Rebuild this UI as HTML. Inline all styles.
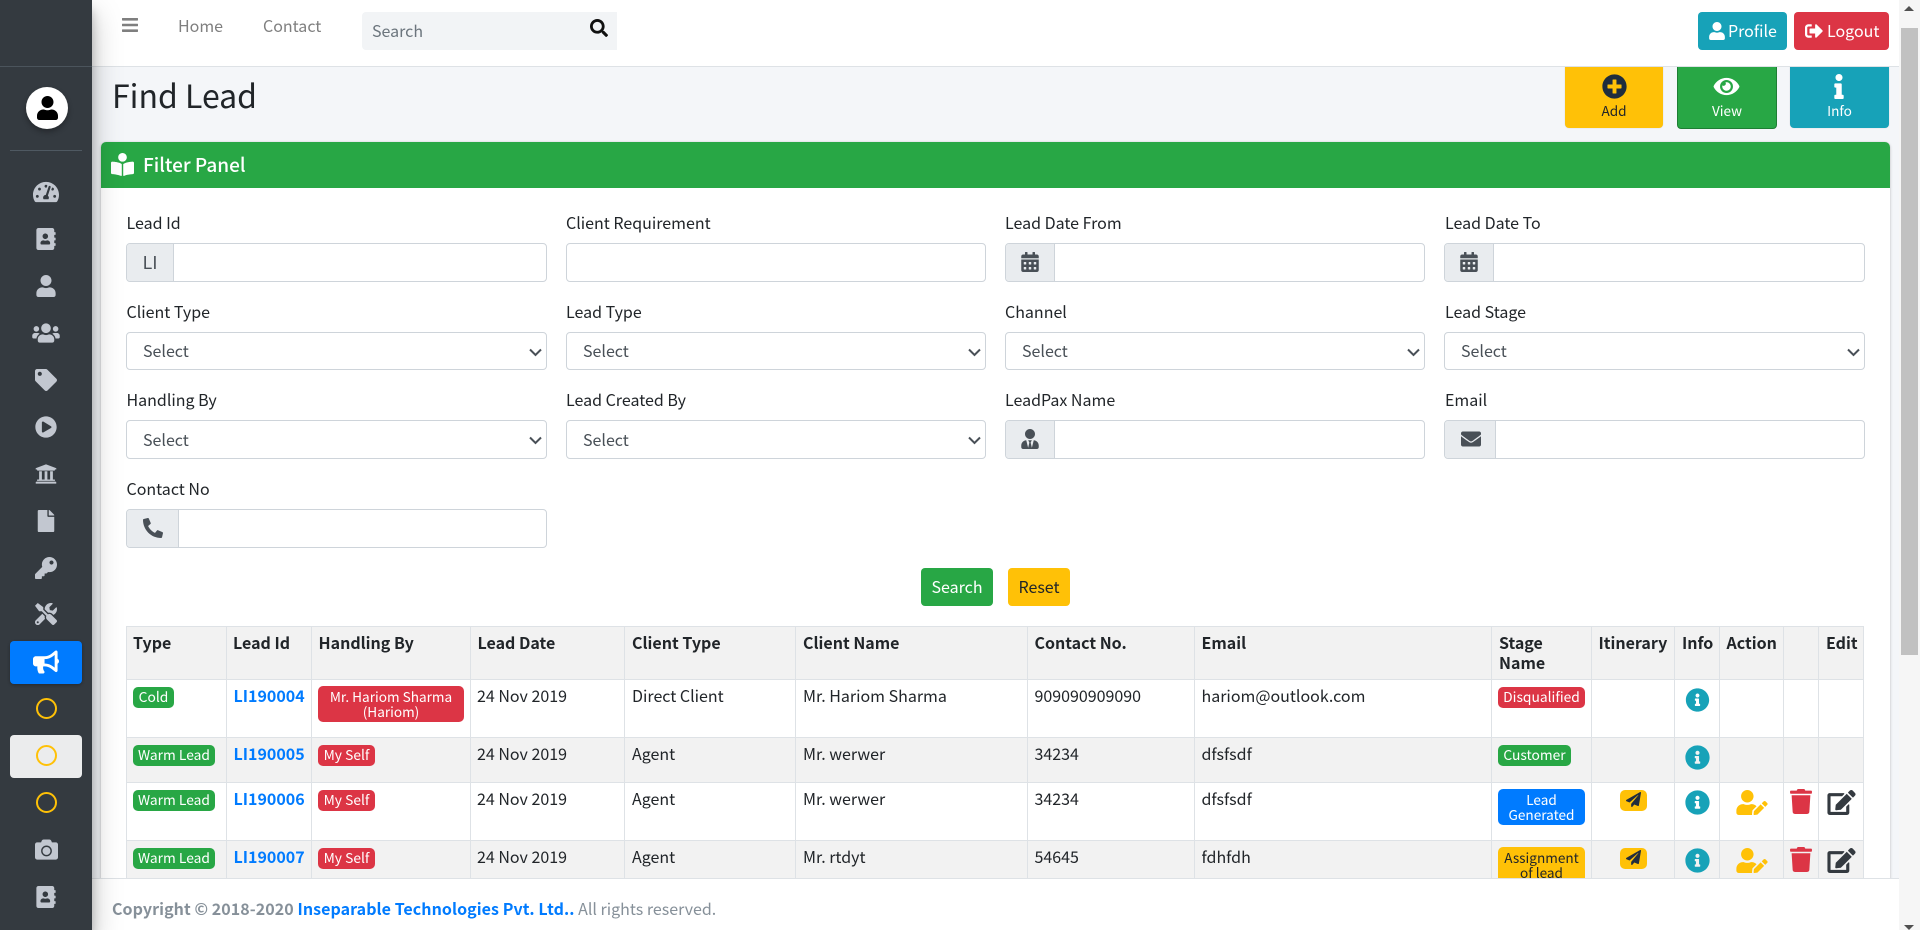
<!DOCTYPE html>
<html lang="en">
<head>
<meta charset="utf-8">
<title>Find Lead</title>
<style>
html,body{margin:0;padding:0;width:1920px;height:930px;overflow:hidden;background:#f4f6f9}
body{font-family:"Noto Sans CJK JP","Liberation Sans",sans-serif;font-size:16px;color:#212529;position:relative}
div,span,svg,a{position:absolute;box-sizing:border-box}
.t{white-space:nowrap;line-height:20px;height:20px}
.c{text-align:center}
b{font-weight:700}
svg{fill:currentColor;display:block}
#side{left:0;top:0;width:92px;height:930px;background:#343a40;box-shadow:0 14px 28px rgba(0,0,0,.25),0 10px 10px rgba(0,0,0,.22);z-index:5;color:#c2c7d0}
#main{left:0;top:0;width:1899px;height:878px;overflow:hidden}
#head{left:92px;top:0;width:1807px;height:67px;background:#fff;border-bottom:1px solid #dee2e6;z-index:3}
.box{background:#fff;border:1px solid #ced4da;border-radius:4px;height:39px}
.ad{left:0;top:0;bottom:0;background:#e9ecef;border-right:1px solid #ced4da;border-radius:3px 0 0 3px;color:#495057}
.sel{color:#495057;font-size:16px}
.hl{left:126px;width:1738px;height:1px;background:#dee2e6}
.vl{top:626px;width:1px;height:252px;background:#dee2e6}
.bd{border-radius:5px;color:#fff;font-size:13.8px;line-height:14px;text-align:center;height:21px;padding-top:2px;white-space:nowrap}
.two{font-size:13.6px;line-height:14.5px;padding-top:3px}
.gr{background:#28a745}.rd{background:#dc3545}.bl{background:#007bff}.ye{background:#ffc107;color:#212529}
.lk{color:#007bff;font-weight:700}
.th{font-weight:700}
.ch{fill:none;stroke:#495057;stroke-width:2;width:13px;height:9px}
.ring{width:21px;height:21px;border:2.5px solid #ffc107;border-radius:50%}
</style>
</head>
<body>
<svg width="0" height="0" style="left:0;top:0">
<defs>
<symbol id="user" viewBox="0 0 448 512"><path d="M224 256c70.7 0 128-57.3 128-128S294.7 0 224 0 96 57.3 96 128s57.3 128 128 128zm89.6 32h-16.7c-22.2 10.2-46.9 16-72.9 16s-50.6-5.8-72.9-16h-16.7C60.2 288 0 348.2 0 422.4V464c0 26.5 21.5 48 48 48h352c26.5 0 48-21.5 48-48v-41.6c0-74.2-60.2-134.4-134.4-134.4z"/></symbol>
<symbol id="abook" viewBox="0 0 448 512"><path d="M436 160c6.6 0 12-5.4 12-12v-40c0-6.6-5.4-12-12-12h-20V48c0-26.5-21.5-48-48-48H48C21.5 0 0 21.5 0 48v416c0 26.5 21.5 48 48 48h320c26.5 0 48-21.5 48-48v-48h20c6.6 0 12-5.4 12-12v-40c0-6.6-5.4-12-12-12h-20v-64h20c6.6 0 12-5.4 12-12v-40c0-6.6-5.4-12-12-12h-20v-64h20zm-228-32c35.3 0 64 28.7 64 64s-28.7 64-64 64-64-28.7-64-64 28.7-64 64-64zm112 236.8c0 10.6-10 19.2-22.4 19.2H118.4C106 384 96 375.4 96 364.8v-19.2c0-31.8 30.1-57.6 67.2-57.6h5c12.3 5.1 25.7 8 39.8 8s27.6-2.9 39.8-8h5c37.1 0 67.2 25.8 67.2 57.6v19.2z"/></symbol>
<symbol id="cal" viewBox="0 0 448 512"><path d="M0 464c0 26.5 21.5 48 48 48h352c26.5 0 48-21.5 48-48V192H0v272zm320-196c0-6.6 5.4-12 12-12h40c6.6 0 12 5.4 12 12v40c0 6.6-5.4 12-12 12h-40c-6.6 0-12-5.4-12-12v-40zm0 128c0-6.6 5.4-12 12-12h40c6.6 0 12 5.4 12 12v40c0 6.6-5.4 12-12 12h-40c-6.6 0-12-5.4-12-12v-40zM192 268c0-6.6 5.4-12 12-12h40c6.6 0 12 5.4 12 12v40c0 6.6-5.4 12-12 12h-40c-6.6 0-12-5.4-12-12v-40zm0 128c0-6.6 5.4-12 12-12h40c6.6 0 12 5.4 12 12v40c0 6.6-5.4 12-12 12h-40c-6.6 0-12-5.4-12-12v-40zM64 268c0-6.6 5.4-12 12-12h40c6.6 0 12 5.4 12 12v40c0 6.6-5.4 12-12 12H76c-6.6 0-12-5.4-12-12v-40zm0 128c0-6.6 5.4-12 12-12h40c6.6 0 12 5.4 12 12v40c0 6.6-5.4 12-12 12H76c-6.6 0-12-5.4-12-12v-40zM400 64h-48V16c0-8.8-7.2-16-16-16h-32c-8.8 0-16 7.2-16 16v48H160V16c0-8.8-7.2-16-16-16h-32c-8.8 0-16 7.2-16 16v48H48C21.5 64 0 85.5 0 112v48h448v-48c0-26.5-21.5-48-48-48z"/></symbol>
<symbol id="infoc" viewBox="0 0 512 512"><path d="M256 8C119.043 8 8 119.083 8 256c0 136.997 111.043 248 248 248s248-111.003 248-248C504 119.083 392.957 8 256 8zm0 110c23.196 0 42 18.804 42 42s-18.804 42-42 42-42-18.804-42-42 18.804-42 42-42zm56 254c0 6.627-5.373 12-12 12h-88c-6.627 0-12-5.373-12-12v-24c0-6.627 5.373-12 12-12h12v-64h-12c-6.627 0-12-5.373-12-12v-24c0-6.627 5.373-12 12-12h64c6.627 0 12 5.373 12 12v100h12c6.627 0 12 5.373 12 12v24z"/></symbol>
<symbol id="plane" viewBox="0 0 512 512"><path d="M476 3.2L12.5 270.6c-18.1 10.4-15.8 35.6 2.2 43.2L121 358.4l287.3-253.2c5.5-4.9 13.3 2.6 8.6 8.3L176 407v80.5c0 23.6 28.5 32.9 42.5 15.8L282 426l124.6 52.2c14.2 6 30.4-2.9 33-18.2l72-432C515 7.8 493.3-6.8 476 3.2z"/></symbol>
<symbol id="uedit" viewBox="0 0 640 512"><path d="M224 256c70.7 0 128-57.3 128-128S294.7 0 224 0 96 57.3 96 128s57.3 128 128 128zm89.6 32h-16.7c-22.2 10.2-46.9 16-72.9 16s-50.6-5.8-72.9-16h-16.7C60.2 288 0 348.2 0 422.4V464c0 26.5 21.5 48 48 48h274.9c-2.4-6.8-3.4-14-2.6-21.3l6.8-60.9 1.2-11.1 7.9-7.9 77.3-77.3c-24.5-27.7-60-45.5-99.9-45.5zm45.3 145.3l-6.8 61c-1.1 10.2 7.5 18.8 17.6 17.6l60.9-6.8 137.9-137.9-71.7-71.7-137.9 137.8zM633 268.9L595.1 231c-9.3-9.3-24.5-9.3-33.8 0l-37.8 37.8-4.1 4.1 71.8 71.7 41.8-41.8c9.3-9.4 9.3-24.5 0-33.9z"/></symbol>
<symbol id="trash" viewBox="0 0 448 512"><path d="M432 32H312l-9.4-18.7A24 24 0 0 0 281.1 0H166.8a23.72 23.72 0 0 0-21.4 13.3L136 32H16A16 16 0 0 0 0 48v32a16 16 0 0 0 16 16h416a16 16 0 0 0 16-16V48a16 16 0 0 0-16-16zM53.2 467a48 48 0 0 0 47.9 45h245.8a48 48 0 0 0 47.9-45L416 128H32z"/></symbol>
<symbol id="edit" viewBox="0 0 576 512"><path d="M402.6 83.2l90.2 90.2c3.8 3.8 3.8 10 0 13.8L274.4 405.6l-92.8 10.3c-12.4 1.4-22.9-9.1-21.5-21.5l10.3-92.8L388.8 83.2c3.8-3.8 10-3.8 13.8 0zm162-22.9l-48.8-48.8c-15.2-15.2-39.9-15.2-55.2 0l-35.4 35.4c-3.8 3.8-3.8 10 0 13.8l90.2 90.2c3.8 3.8 10 3.8 13.8 0l35.4-35.4c15.2-15.3 15.2-40 0-55.2zM384 346.2V448H64V128h229.8c3.2 0 6.2-1.3 8.5-3.5l40-40c7.6-7.6 2.2-20.5-8.5-20.5H48C21.5 64 0 85.5 0 112v352c0 26.5 21.5 48 48 48h352c26.5 0 48-21.5 48-48V306.2c0-10.7-12.9-16-20.5-8.5l-40 40c-2.2 2.3-3.5 5.3-3.5 8.5z"/></symbol>
</defs>
</svg>

<div id="main">
  <div class="t" style="left:112px;top:73px;font-size:32px;line-height:44px;height:44px">Find Lead</div>

  <div style="left:1565px;top:60px;width:98px;height:68px;background:#ffc107;border-radius:0 0 4px 4px;box-shadow:0 0 1px rgba(0,0,0,.2)"></div>
  <svg style="left:1602px;top:74px;width:25px;height:25px;color:#1f2d3d" viewBox="0 0 512 512"><path d="M256 8C119 8 8 119 8 256s111 248 248 248 248-111 248-248S393 8 256 8zm144 276c0 6.6-5.4 12-12 12h-92v92c0 6.6-5.4 12-12 12h-56c-6.6 0-12-5.4-12-12v-92h-92c-6.6 0-12-5.4-12-12v-56c0-6.6 5.4-12 12-12h92v-92c0-6.6 5.4-12 12-12h56c6.6 0 12 5.4 12 12v92h92c6.6 0 12 5.4 12 12v56z"/></svg>
  <div class="t c" style="left:1565px;width:98px;top:100px;font-size:13.6px;color:#212529">Add</div>

  <div style="left:1677px;top:60px;width:100px;height:69px;background:#28a745;border:1px solid #1e7e34;border-radius:0 0 4px 4px"></div>
  <svg style="left:1712px;top:75px;width:29px;height:23px;color:#fff" viewBox="0 0 576 512"><path d="M572.52 241.4C518.29 135.59 410.93 64 288 64S57.68 135.64 3.48 241.41a32.35 32.35 0 0 0 0 29.19C57.71 376.41 165.07 448 288 448s230.32-71.64 284.52-177.41a32.35 32.35 0 0 0 0-29.19zM288 400a144 144 0 1 1 144-144 143.93 143.93 0 0 1-144 144zm0-240a95.31 95.31 0 0 0-25.31 3.79 47.85 47.85 0 0 1-66.9 66.9A95.78 95.78 0 1 0 288 160z"/></svg>
  <div class="t c" style="left:1677px;width:100px;top:100px;font-size:13.6px;color:#fff">View</div>

  <div style="left:1790px;top:60px;width:99px;height:68px;background:#17a2b8;border-radius:0 0 4px 4px;box-shadow:0 0 1px rgba(0,0,0,.2)"></div>
  <svg style="left:1834px;top:74px;width:10px;height:25px;color:#fff" viewBox="0 0 192 512"><path d="M20 424.229h20V279.771H20c-11.046 0-20-8.954-20-20V212c0-11.046 8.954-20 20-20h112c11.046 0 20 8.954 20 20v212.229h20c11.046 0 20 8.954 20 20V492c0 11.046-8.954 20-20 20H20c-11.046 0-20-8.954-20-20v-47.771c0-11.046 8.954-20 20-20zM96 0C56.235 0 24 32.235 24 72s32.235 72 72 72 72-32.235 72-72S135.764 0 96 0z"/></svg>
  <div class="t c" style="left:1790px;width:99px;top:100px;font-size:13.6px;color:#fff">Info</div>

  <div style="left:101px;top:142px;width:1789px;height:800px;background:#fff;border-radius:5px 5px 0 0;box-shadow:0 0 1px rgba(0,0,0,.125),0 1px 3px rgba(0,0,0,.2)"></div>
  <div style="left:101px;top:142px;width:1789px;height:46px;background:#28a745;border-radius:5px 5px 0 0"></div>
  <svg style="left:111px;top:153px;width:23px;height:23px;color:#fff" viewBox="0 0 512 512"><path d="M352 96c0-53.02-42.98-96-96-96s-96 42.98-96 96 42.98 96 96 96 96-42.98 96-96zM233.59 241.1c-59.33-36.32-155.43-46.3-203.79-49.05C13.55 191.13 0 203.51 0 219.14v222.8c0 14.33 11.59 26.28 26.49 27.05 43.66 2.29 131.99 10.68 193.04 41.43 9.37 4.72 20.48-1.71 20.48-11.87V252.56c-.01-4.67-2.32-8.95-6.42-11.46zm248.61-49.05c-48.35 2.74-144.46 12.73-203.78 49.05-4.1 2.51-6.41 6.96-6.41 11.63v245.79c0 10.19 11.14 16.63 20.54 11.9 61.04-30.72 149.32-39.11 192.97-41.4 14.9-.78 26.49-12.73 26.49-27.06V219.14c-.01-15.63-13.56-28.01-29.81-27.09z"/></svg>
  <div class="t" style="left:143px;top:153px;font-size:19px;line-height:24px;height:24px;color:#fff;font-weight:500">Filter Panel</div>

  <!-- Row 1 -->
  <div class="t" style="left:126.5px;top:212px">Lead Id</div>
  <div class="t" style="left:566px;top:212px">Client Requirement</div>
  <div class="t" style="left:1005px;top:212px">Lead Date From</div>
  <div class="t" style="left:1445px;top:212px">Lead Date To</div>

  <div class="box" style="left:126px;top:243px;width:421px"><div class="ad" style="width:47px"><div class="t c" style="left:0;width:46px;top:8px;font-size:18px">LI</div></div></div>
  <div class="box" style="left:566px;top:243px;width:420px"></div>
  <div class="box" style="left:1005px;top:243px;width:420px"><div class="ad" style="width:49px"><svg style="left:15px;top:8px;width:18px;height:20px"><use href="#cal"/></svg></div></div>
  <div class="box" style="left:1444px;top:243px;width:421px"><div class="ad" style="width:49px"><svg style="left:15px;top:8px;width:18px;height:20px"><use href="#cal"/></svg></div></div>

  <!-- Row 2 -->
  <div class="t" style="left:126.5px;top:301px">Client Type</div>
  <div class="t" style="left:566px;top:301px">Lead Type</div>
  <div class="t" style="left:1005px;top:301px">Channel</div>
  <div class="t" style="left:1445px;top:301px">Lead Stage</div>

  <div class="box" style="left:126px;top:332px;width:421px;height:38px"><div class="t sel" style="left:16px;top:7px">Select</div><svg class="ch" style="left:402px;top:15px" viewBox="0 0 13 9"><path d="M1 1.5l5.5 5.5 5.5-5.5"/></svg></div>
  <div class="box" style="left:566px;top:332px;width:420px;height:38px"><div class="t sel" style="left:16px;top:7px">Select</div><svg class="ch" style="left:401px;top:15px" viewBox="0 0 13 9"><path d="M1 1.5l5.5 5.5 5.5-5.5"/></svg></div>
  <div class="box" style="left:1005px;top:332px;width:420px;height:38px"><div class="t sel" style="left:16px;top:7px">Select</div><svg class="ch" style="left:401px;top:15px" viewBox="0 0 13 9"><path d="M1 1.5l5.5 5.5 5.5-5.5"/></svg></div>
  <div class="box" style="left:1444px;top:332px;width:421px;height:38px"><div class="t sel" style="left:16px;top:7px">Select</div><svg class="ch" style="left:402px;top:15px" viewBox="0 0 13 9"><path d="M1 1.5l5.5 5.5 5.5-5.5"/></svg></div>

  <!-- Row 3 -->
  <div class="t" style="left:126.5px;top:389px">Handling By</div>
  <div class="t" style="left:566px;top:389px">Lead Created By</div>
  <div class="t" style="left:1005px;top:389px">LeadPax Name</div>
  <div class="t" style="left:1445px;top:389px">Email</div>

  <div class="box" style="left:126px;top:420px;width:421px"><div class="t sel" style="left:16px;top:8px">Select</div><svg class="ch" style="left:402px;top:15px" viewBox="0 0 13 9"><path d="M1 1.5l5.5 5.5 5.5-5.5"/></svg></div>
  <div class="box" style="left:566px;top:420px;width:420px"><div class="t sel" style="left:16px;top:8px">Select</div><svg class="ch" style="left:401px;top:15px" viewBox="0 0 13 9"><path d="M1 1.5l5.5 5.5 5.5-5.5"/></svg></div>
  <div class="box" style="left:1005px;top:420px;width:420px"><div class="ad" style="width:49px"><svg style="left:15px;top:8px;width:18px;height:20px" viewBox="0 0 448 512"><path d="M224 256c70.7 0 128-57.3 128-128S294.7 0 224 0 96 57.3 96 128s57.3 128 128 128zm95.8 32.6L272 480l-32-136 32-56h-96l32 56-32 136-47.8-191.4C56.9 292 0 350.3 0 422.4V464c0 26.5 21.5 48 48 48h352c26.5 0 48-21.5 48-48v-41.6c0-72.1-56.9-130.4-128.2-133.8z"/></svg></div></div>
  <div class="box" style="left:1444px;top:420px;width:421px"><div class="ad" style="width:51px"><svg style="left:16px;top:8px;width:20px;height:20px" viewBox="0 0 512 512"><path d="M502.3 190.8c3.9-3.1 9.7-.2 9.7 4.7V400c0 26.5-21.5 48-48 48H48c-26.5 0-48-21.5-48-48V195.6c0-5 5.7-7.8 9.7-4.7 22.4 17.4 52.1 39.5 154.1 113.6 21.1 15.4 56.7 47.8 92.2 47.6 35.7.3 72-32.8 92.3-47.6 102-74.1 131.6-96.3 154-113.7zM256 320c23.2.4 56.6-29.2 73.4-41.4 132.7-96.3 142.8-104.7 173.4-128.7 5.8-4.5 9.2-11.5 9.2-18.9v-19c0-26.5-21.5-48-48-48H48C21.5 64 0 85.5 0 112v19c0 7.4 3.4 14.3 9.2 18.9 30.6 23.9 40.7 32.4 173.4 128.7 16.8 12.2 50.2 41.8 73.4 41.4z"/></svg></div></div>

  <!-- Row 4 -->
  <div class="t" style="left:126.5px;top:478px">Contact No</div>
  <div class="box" style="left:126px;top:509px;width:421px"><div class="ad" style="width:52px"><svg style="left:16px;top:8px;width:20px;height:20px;transform:scaleX(-1)" viewBox="0 0 512 512"><path d="M493.4 24.6l-104-24c-11.3-2.6-22.9 3.3-27.5 13.9l-48 112c-4.2 9.8-1.4 21.3 6.9 28l60.6 49.6c-36 76.7-98.9 140.5-177.2 177.2l-49.6-60.6c-6.8-8.3-18.2-11.1-28-6.9l-112 48C3.9 366.5-2 378.1.6 389.4l24 104C27.1 504.2 36.7 512 48 512c256.1 0 464-207.5 464-464 0-11.2-7.7-20.9-18.6-23.4z"/></svg></div></div>

  <div style="left:921px;top:568px;width:72px;height:38px;background:#28a745;border-radius:4px"><div class="t c" style="left:0;width:72px;top:8px;color:#fff">Search</div></div>
  <div style="left:1008px;top:568px;width:62px;height:38px;background:#ffc107;border-radius:4px"><div class="t c" style="left:0;width:62px;top:8px">Reset</div></div>

  <!-- Table backgrounds -->
  <div style="left:126px;top:626px;width:1738px;height:54px;background:#f2f2f2"></div>
  <div style="left:126px;top:737px;width:1738px;height:46px;background:#f2f2f2"></div>
  <div style="left:126px;top:840px;width:1738px;height:40px;background:#f2f2f2"></div>
  <div class="hl" style="top:626px"></div><div class="hl" style="top:679px"></div><div class="hl" style="top:737px"></div><div class="hl" style="top:782px"></div><div class="hl" style="top:840px"></div>
  <div class="vl" style="left:126px"></div><div class="vl" style="left:226px"></div><div class="vl" style="left:311px"></div><div class="vl" style="left:470px"></div><div class="vl" style="left:624px"></div><div class="vl" style="left:795px"></div><div class="vl" style="left:1027px"></div><div class="vl" style="left:1194px"></div><div class="vl" style="left:1491px"></div><div class="vl" style="left:1591px"></div><div class="vl" style="left:1674px"></div><div class="vl" style="left:1719px"></div><div class="vl" style="left:1783px"></div><div class="vl" style="left:1818px"></div><div class="vl" style="left:1863px"></div>

  <!-- Table head -->
  <div class="t th" style="left:133px;top:632px">Type</div>
  <div class="t th" style="left:233px;top:632px">Lead Id</div>
  <div class="t th" style="left:318.5px;top:632px">Handling By</div>
  <div class="t th" style="left:477.5px;top:632px">Lead Date</div>
  <div class="t th" style="left:632px;top:632px">Client Type</div>
  <div class="t th" style="left:803px;top:632px">Client Name</div>
  <div class="t th" style="left:1034.5px;top:632px">Contact No.</div>
  <div class="t th" style="left:1201.5px;top:632px">Email</div>
  <div class="t th" style="left:1499px;top:632px">Stage</div>
  <div class="t th" style="left:1499px;top:652px">Name</div>
  <div class="t th" style="left:1598.5px;top:632px">Itinerary</div>
  <div class="t th" style="left:1682px;top:632px">Info</div>
  <div class="t th" style="left:1726.5px;top:632px">Action</div>
  <div class="t th" style="left:1826px;top:632px">Edit</div>

  <!-- Row 1 -->
  <div class="bd gr" style="left:133px;top:687px;width:41px">Cold</div>
  <div class="t lk" style="left:233.5px;top:685px">LI190004</div>
  <div class="bd rd two" style="left:318px;top:686px;width:146px;height:36px">Mr. Hariom Sharma<br>(Hariom)</div>
  <div class="t" style="left:477px;top:685px">24 Nov 2019</div>
  <div class="t" style="left:632px;top:685px">Direct Client</div>
  <div class="t" style="left:803px;top:685px">Mr. Hariom Sharma</div>
  <div class="t" style="left:1034.5px;top:685px">909090909090</div>
  <div class="t" style="left:1201.5px;top:685px">hariom@outlook.com</div>
  <div class="bd rd" style="left:1498px;top:687px;width:87px">Disqualified</div>
  <svg style="left:1685px;top:688px;width:25px;height:24px;color:#17a2b8"><use href="#infoc"/></svg>

  <!-- Row 2 -->
  <div class="bd gr" style="left:133px;top:745px;width:82px">Warm Lead</div>
  <div class="t lk" style="left:233.5px;top:743px">LI190005</div>
  <div class="bd rd" style="left:318px;top:745px;width:57px">My Self</div>
  <div class="t" style="left:477px;top:743px">24 Nov 2019</div>
  <div class="t" style="left:632px;top:743px">Agent</div>
  <div class="t" style="left:803px;top:743px">Mr. werwer</div>
  <div class="t" style="left:1034.5px;top:743px">34234</div>
  <div class="t" style="left:1201.5px;top:743px">dfsfsdf</div>
  <div class="bd gr" style="left:1498px;top:745px;width:73px">Customer</div>
  <svg style="left:1685px;top:745px;width:25px;height:25px;color:#17a2b8"><use href="#infoc"/></svg>

  <!-- Row 3 -->
  <div class="bd gr" style="left:133px;top:790px;width:82px">Warm Lead</div>
  <div class="t lk" style="left:233.5px;top:788px">LI190006</div>
  <div class="bd rd" style="left:318px;top:790px;width:57px">My Self</div>
  <div class="t" style="left:477px;top:788px">24 Nov 2019</div>
  <div class="t" style="left:632px;top:788px">Agent</div>
  <div class="t" style="left:803px;top:788px">Mr. werwer</div>
  <div class="t" style="left:1034.5px;top:788px">34234</div>
  <div class="t" style="left:1201.5px;top:788px">dfsfsdf</div>
  <div class="bd bl two" style="left:1498px;top:789px;width:87px;height:36px">Lead<br>Generated</div>
  <div class="bd ye" style="left:1620px;top:790px;width:27px"></div>
  <svg style="left:1626px;top:792px;width:15px;height:15px;color:#212d3d"><use href="#plane"/></svg>
  <svg style="left:1685px;top:790px;width:25px;height:25px;color:#17a2b8"><use href="#infoc"/></svg>
  <svg style="left:1736px;top:790px;width:32px;height:25px;color:#ffc107"><use href="#uedit"/></svg>
  <svg style="left:1790px;top:789px;width:22px;height:25px;color:#dc3545"><use href="#trash"/></svg>
  <svg style="left:1827px;top:790px;width:29px;height:25px;color:#343a40"><use href="#edit"/></svg>

  <!-- Row 4 -->
  <div class="bd gr" style="left:133px;top:848px;width:82px">Warm Lead</div>
  <div class="t lk" style="left:233.5px;top:846px">LI190007</div>
  <div class="bd rd" style="left:318px;top:848px;width:57px">My Self</div>
  <div class="t" style="left:477px;top:846px">24 Nov 2019</div>
  <div class="t" style="left:632px;top:846px">Agent</div>
  <div class="t" style="left:803px;top:846px">Mr. rtdyt</div>
  <div class="t" style="left:1034.5px;top:846px">54645</div>
  <div class="t" style="left:1201.5px;top:846px">fdhfdh</div>
  <div class="bd ye two" style="left:1498px;top:847px;width:87px;height:36px">Assignment<br>of lead</div>
  <div class="bd ye" style="left:1620px;top:848px;width:27px"></div>
  <svg style="left:1626px;top:850px;width:15px;height:15px;color:#212d3d"><use href="#plane"/></svg>
  <svg style="left:1685px;top:848px;width:25px;height:25px;color:#17a2b8"><use href="#infoc"/></svg>
  <svg style="left:1736px;top:848px;width:32px;height:25px;color:#ffc107"><use href="#uedit"/></svg>
  <svg style="left:1790px;top:847px;width:22px;height:25px;color:#dc3545"><use href="#trash"/></svg>
  <svg style="left:1827px;top:848px;width:29px;height:25px;color:#343a40"><use href="#edit"/></svg>
</div>

<!-- Header -->
<div id="head">
  <svg style="left:30px;top:18px;width:16px;height:14px;color:#7f7f7f" viewBox="0 60 448 392" preserveAspectRatio="none"><path d="M16 132h416c8.837 0 16-7.163 16-16V76c0-8.837-7.163-16-16-16H16C7.163 60 0 67.163 0 76v40c0 8.837 7.163 16 16 16zm0 160h416c8.837 0 16-7.163 16-16v-40c0-8.837-7.163-16-16-16H16c-8.837 0-16 7.163-16 16v40c0 8.837 7.163 16 16 16zm0 160h416c8.837 0 16-7.163 16-16v-40c0-8.837-7.163-16-16-16H16c-8.837 0-16 7.163-16 16v40c0 8.837 7.163 16 16 16z"/></svg>
  <div class="t" style="left:86px;top:15px;color:#7f7f7f">Home</div>
  <div class="t" style="left:171px;top:15px;color:#7f7f7f">Contact</div>
  <div style="left:270px;top:12px;width:255px;height:38px;background:#f2f4f6;border-radius:4px 0 0 4px"><div class="t" style="left:10px;top:8px;color:#6c757d">Search</div>
    <svg style="left:228px;top:7px;width:18px;height:18px;color:#111" viewBox="0 0 512 512"><path d="M505 442.7L405.3 343c-4.5-4.5-10.6-7-17-7H372c27.6-35.3 44-79.7 44-128C416 93.1 322.9 0 208 0S0 93.1 0 208s93.1 208 208 208c48.3 0 92.7-16.4 128-44v16.3c0 6.4 2.5 12.5 7 17l99.7 99.7c9.4 9.4 24.6 9.4 33.9 0l28.3-28.3c9.4-9.4 9.4-24.6.1-34zM208 336c-70.7 0-128-57.2-128-128 0-70.7 57.2-128 128-128 70.7 0 128 57.2 128 128 0 70.7-57.2 128-128 128z"/></svg></div>
  <div style="left:1606px;top:12px;width:89px;height:38px;background:#17a2b8;border-radius:4px"><svg style="left:11px;top:10px;width:16px;height:18px;color:#fff"><use href="#user"/></svg><div class="t" style="left:30px;top:8px;color:#fff">Profile</div></div>
  <div style="left:1702px;top:12px;width:95px;height:38px;background:#dc3545;border-radius:4px"><svg style="left:11px;top:10px;width:18px;height:18px;color:#fff" viewBox="0 0 512 512"><path d="M497 273L329 441c-15 15-41 4.5-41-17v-96H152c-13.3 0-24-10.7-24-24v-96c0-13.3 10.7-24 24-24h136V88c0-21.4 25.9-32 41-17l168 168c9.3 9.4 9.3 24.6 0 34zM192 436v-40c0-6.6-5.4-12-12-12H96c-17.7 0-32-14.3-32-32V160c0-17.7 14.3-32 32-32h84c6.6 0 12-5.4 12-12V76c0-6.6-5.4-12-12-12H96c-53 0-96 43-96 96v192c0 53 43 96 96 96h84c6.6 0 12-5.4 12-12z"/></svg><div class="t" style="left:33px;top:8px;color:#fff">Logout</div></div>
</div>

<!-- Footer -->
<div style="left:92px;top:878px;width:1807px;height:52px;background:#fff;border-top:1px solid #dee2e6;z-index:3">
  <div class="t" style="left:20px;top:19px;color:#869099"><b style="letter-spacing:.06px">Copyright © 2018-2020 <span style="position:static;color:#007bff">Inseparable Technologies Pvt. Ltd..</span></b> All rights reserved.</div>
</div>

<!-- Sidebar -->
<div id="side">
  <div style="left:0;top:66px;width:92px;height:1px;background:#4b545c"></div>
  <div style="left:26px;top:87px;width:42px;height:42px;border-radius:50%;background:#fff;box-shadow:0 3px 6px rgba(0,0,0,.3)"></div>
  <svg style="left:37px;top:96px;width:21px;height:24px;color:#000"><use href="#user"/></svg>
  <div style="left:10px;top:150px;width:72px;height:1px;background:#4f5962"></div>
  <svg style="left:33px;top:180px;width:26px;height:24px" viewBox="0 0 576 512"><path d="M288 32C128.94 32 0 160.94 0 320c0 52.8 14.25 102.26 39.06 144.8 5.61 9.62 16.3 15.2 27.44 15.2h443c11.14 0 21.83-5.58 27.44-15.2C561.75 422.26 576 372.8 576 320c0-159.06-128.94-288-288-288zm0 64c14.71 0 26.58 10.13 30.32 23.65-1.11 2.26-2.64 4.23-3.45 6.67l-9.22 27.67c-5.13 3.49-10.97 6.01-17.64 6.01-17.67 0-32-14.33-32-32S270.33 96 288 96zM96 384c-17.67 0-32-14.33-32-32s14.33-32 32-32 32 14.33 32 32-14.33 32-32 32zm48-160c-17.67 0-32-14.33-32-32s14.33-32 32-32 32 14.33 32 32-14.33 32-32 32zm246.77-72.41l-61.33 184C343.13 347.33 352 364.54 352 384c0 11.72-3.38 22.55-8.88 32H232.88c-5.5-9.45-8.88-20.28-8.88-32 0-33.94 26.5-61.43 59.9-63.59l61.34-184.01c4.17-12.56 17.73-19.45 30.36-15.17 12.57 4.19 19.35 17.79 15.17 30.36zm14.66 57.2l15.52-46.55c3.47-1.29 7.13-2.23 11.05-2.23 17.67 0 32 14.33 32 32s-14.33 32-32 32c-11.38-.01-20.89-6.27-26.57-15.22zM480 384c-17.67 0-32-14.33-32-32s14.33-32 32-32 32 14.33 32 32-14.33 32-32 32z"/></svg>
  <svg style="left:36px;top:228px;width:20px;height:22px"><use href="#abook"/></svg>
  <svg style="left:36px;top:275px;width:20px;height:22px"><use href="#user"/></svg>
  <svg style="left:32px;top:322px;width:28px;height:22px" viewBox="0 0 640 512"><path d="M96 224c35.3 0 64-28.7 64-64s-28.7-64-64-64-64 28.7-64 64 28.7 64 64 64zm448 0c35.3 0 64-28.7 64-64s-28.7-64-64-64-64 28.7-64 64 28.7 64 64 64zm32 32h-64c-17.6 0-33.5 7.1-45.1 18.6 40.3 22.1 68.9 62 75.1 109.4h66c17.7 0 32-14.3 32-32v-32c0-35.3-28.7-64-64-64zm-256 0c61.9 0 112-50.1 112-112S381.9 32 320 32 208 82.1 208 144s50.1 112 112 112zm76.8 32h-8.3c-20.8 10-43.9 16-68.5 16s-47.6-6-68.5-16h-8.3C179.6 288 128 339.6 128 403.2V432c0 26.5 21.5 48 48 48h288c26.5 0 48-21.5 48-48v-28.8c0-63.6-51.6-115.2-115.2-115.2zm-223.7-13.4C161.5 263.1 145.6 256 128 256H64c-35.3 0-64 28.7-64 64v32c0 17.7 14.3 32 32 32h65.9c6.3-47.4 34.9-87.3 75.2-109.4z"/></svg>
  <svg style="left:35px;top:369px;width:22px;height:22px" viewBox="0 0 512 512"><path d="M0 252.118V48C0 21.49 21.49 0 48 0h204.118a48 48 0 0 1 33.941 14.059l211.882 211.882c18.745 18.745 18.745 49.137 0 67.882L293.823 497.941c-18.745 18.745-49.137 18.745-67.882 0L14.059 286.059A48 48 0 0 1 0 252.118zM112 64c-26.51 0-48 21.49-48 48s21.49 48 48 48 48-21.49 48-48-21.49-48-48-48z"/></svg>
  <svg style="left:35px;top:416px;width:22px;height:22px" viewBox="0 0 512 512"><path d="M256 8C119 8 8 119 8 256s111 248 248 248 248-111 248-248S393 8 256 8zm115.7 272l-176 101c-15.8 8.8-35.7-2.5-35.7-21V152c0-18.4 19.8-29.8 35.7-21l176 107c16.4 9.2 16.4 32.9 0 42z"/></svg>
  <svg style="left:35px;top:463px;width:22px;height:22px" viewBox="0 0 512 512"><path d="M496 128v16a8 8 0 0 1-8 8h-24v12c0 6.627-5.373 12-12 12H60c-6.627 0-12-5.373-12-12v-12H24a8 8 0 0 1-8-8v-16a8 8 0 0 1 4.941-7.392l232-88a7.996 7.996 0 0 1 6.118 0l232 88A8 8 0 0 1 496 128zm-24 304H40c-13.255 0-24 10.745-24 24v16a8 8 0 0 0 8 8h464a8 8 0 0 0 8-8v-16c0-13.255-10.745-24-24-24zM96 192v192H60c-6.627 0-12 5.373-12 12v20h416v-20c0-6.627-5.373-12-12-12h-36V192h-64v192h-64V192h-64v192h-64V192H96z"/></svg>
  <svg style="left:37px;top:510px;width:18px;height:22px" viewBox="0 0 384 512"><path d="M224 136V0H24C10.7 0 0 10.7 0 24v464c0 13.3 10.7 24 24 24h336c13.3 0 24-10.7 24-24V160H248c-13.2 0-24-10.8-24-24zm160-14.1v6.1H256V0h6.1c6.4 0 12.5 2.5 17 7l97.9 98c4.5 4.5 7 10.6 7 16.9z"/></svg>
  <svg style="left:35px;top:557px;width:22px;height:22px" viewBox="0 0 512 512"><path d="M512 176.001C512 273.203 433.202 352 336 352c-11.22 0-22.19-1.062-32.827-3.069l-24.012 27.014A23.999 23.999 0 0 1 261.223 384H224v40c0 13.255-10.745 24-24 24h-40v40c0 13.255-10.745 24-24 24H24c-13.255 0-24-10.745-24-24v-78.059c0-6.365 2.529-12.47 7.029-16.971l161.802-161.802C163.108 213.814 160 195.271 160 176 160 78.798 238.797.001 335.999 0 433.488-.001 512 78.511 512 176.001zM336 128c0 26.51 21.49 48 48 48s48-21.49 48-48-21.49-48-48-48-48 21.49-48 48z"/></svg>
  <svg style="left:35px;top:603px;width:22px;height:22px" viewBox="0 0 512 512"><path d="M501.1 395.7L384 278.6c-23.1-23.1-57.6-27.6-85.4-13.9L192 158.1V96L64 0 0 64l96 128h62.1l106.6 106.6c-13.6 27.8-9.2 62.3 13.9 85.4l117.1 117.1c14.6 14.6 38.2 14.6 52.7 0l52.7-52.7c14.5-14.6 14.5-38.2 0-52.7zM331.7 225c28.3 0 54.9 11 74.9 31l19.4 19.4c15.8-6.9 30.8-16.5 43.8-29.5 37.1-37.1 49.7-89.3 37.9-136.7-2.2-9-13.5-12.1-20.1-5.5l-74.4 74.4-67.9-11.3L334 98.9l74.4-74.4c6.6-6.6 3.4-17.9-5.7-20.2-47.4-11.7-99.6.9-136.6 37.9-28.5 28.5-41.9 66.1-41.2 103.6l82.1 82.1c8.1-1.9 16.5-2.9 24.7-2.9zm-103.9 82l-56.7-56.7L18.7 402.8c-25 25-25 65.5 0 90.5s65.5 25 90.5 0l123.6-123.6c-7.6-19.9-9.9-41.6-5-62.7zM64 472c-13.2 0-24-10.8-24-24 0-13.3 10.7-24 24-24s24 10.7 24 24c0 13.2-10.7 24-24 24z"/></svg>
  <div style="left:10px;top:641px;width:72px;height:43px;background:#007bff;border-radius:4px;box-shadow:0 1px 3px rgba(0,0,0,.3)"></div>
  <svg style="left:33px;top:650px;width:26px;height:24px;color:#fff" viewBox="0 0 576 512"><path d="M576 240c0-23.63-12.95-44.04-32-55.12V32.01C544 23.26 537.02 0 512 0c-7.12 0-14.19 2.38-19.98 7.02l-85.03 68.03C364.28 109.19 310.66 128 256 128H64c-35.35 0-64 28.65-64 64v96c0 35.35 28.65 64 64 64h33.7c-1.39 10.48-2.18 21.14-2.18 32 0 39.77 9.26 77.35 25.56 110.94 5.19 10.69 16.52 17.06 28.4 17.06h74.28c26.05 0 41.69-29.84 25.9-50.56-16.4-21.52-26.15-48.36-26.15-77.44 0-11.11 1.62-21.79 4.41-32H256c54.66 0 108.28 18.81 150.98 52.95l85.03 68.03a32.023 32.023 0 0 0 19.98 7.02c24.92 0 32-22.78 32-32V295.13C563.05 284.04 576 263.63 576 240zm-96 141.42l-33.05-26.44C392.95 311.78 325.12 288 256 288v-96c69.12 0 136.95-23.78 190.95-66.98L480 98.58v282.84z"/></svg>
  <div class="ring" style="left:36px;top:698px"></div>
  <div style="left:10px;top:735px;width:72px;height:43px;background:#ebeced;border-radius:4px"></div>
  <div class="ring" style="left:36px;top:745px"></div>
  <div class="ring" style="left:36px;top:792px"></div>
  <svg style="left:35px;top:838px;width:23px;height:23px" viewBox="0 0 512 512"><path d="M512 144v288c0 26.5-21.5 48-48 48H48c-26.5 0-48-21.5-48-48V144c0-26.5 21.5-48 48-48h88l12.3-32.9c7-18.7 24.9-31.1 44.9-31.1h125.5c20 0 37.9 12.4 44.9 31.1L376 96h88c26.5 0 48 21.5 48 48zM376 288c0-66.2-53.8-120-120-120s-120 53.8-120 120 53.8 120 120 120 120-53.8 120-120zm-32 0c0 48.5-39.5 88-88 88s-88-39.5-88-88 39.5-88 88-88 88 39.5 88 88z"/></svg>
  <svg style="left:36px;top:886px;width:20px;height:22px"><use href="#abook"/></svg>
</div>

<!-- Scrollbar -->
<div style="left:1899px;top:0;width:21px;height:930px;background:#f6f6f6;z-index:6">
  <div style="left:2px;top:28px;width:17px;height:627px;background:#c1c1c1"></div>
  <div style="left:5px;top:6px;width:0;height:0;border-left:5px solid transparent;border-right:5px solid transparent;border-bottom:5px solid #505050"></div>
  <div style="left:5px;top:925px;width:0;height:0;border-left:5px solid transparent;border-right:5px solid transparent;border-top:5px solid #505050"></div>
</div>
</body>
</html>
